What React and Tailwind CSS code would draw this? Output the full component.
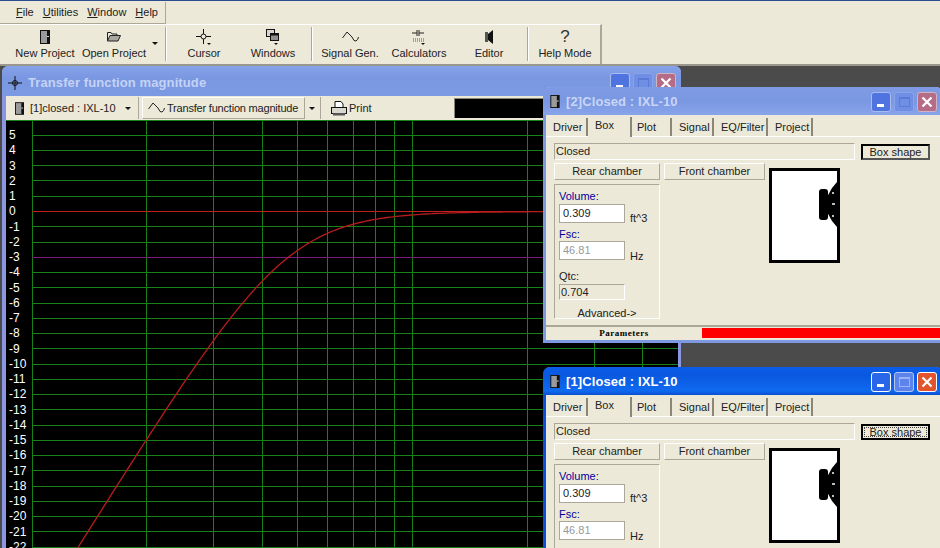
import React from "react"

const yLabels = []
for (let i = 5; i >= -22; i--) yLabels.push(i)

// vertical lines, log scale 10Hz..500Hz
const gridX = [146, 213, 262, 297, 327, 353, 375, 394, 412, 527, 594, 642]

function curvePoints() {
  const pts = []
  for (let x = 78; x <= 678; x += 3) {
    const f = 10 * Math.pow(10, (x - 32) / 381)
    const r = f / 46.81
    const db = 10 * Math.log10(r ** 4 / ((r * r - 1) ** 2 + (r / 0.704) ** 2))
    pts.push(`${x - 32},${(90.5 - db * 15.26).toFixed(1)}`)
  }
  return pts.join(" ")
}

function DriverIcon({ className }) {
  return (
    <svg viewBox="0 0 10 14" className={className}>
      <rect x="0" y="0" width="10" height="14" fill="#111" />
      <rect x="1" y="1" width="6" height="12" fill="#9a9a9a" />
      <rect x="7" y="6" width="2" height="1" fill="#ddd" />
    </svg>
  )
}

function ToolButton({ w, label, children }) {
  return (
    <div className={`flex flex-col items-center pt-[2px] ${w}`}>
      <div className="h-[19px] flex items-center justify-center">{children}</div>
      <span className="text-[11px] leading-[14px] text-[#222] whitespace-nowrap">{label}</span>
    </div>
  )
}

function Sep() {
  return <div className="w-[2px] h-[34px] mt-[2px] border-l border-r border-l-[#aca899] border-r-white" />
}

function Raised({ className, children }) {
  return (
    <div className={`flex items-center justify-center text-[11px] text-[#222] border border-t-white border-l-white border-r-[#aca899] border-b-[#aca899] ${className}`}>
      {children}
    </div>
  )
}

function TitleButtons({ active }) {
  const blue = active ? "bg-[#2a66e8] border-white" : "bg-[#4f74e0] border-[#a9bcef]"
  const red = active ? "bg-[#e2552c] border-white" : "bg-[#b56c86] border-[#d0b4c4]"
  return (
    <div className="flex gap-[3px]">
      <div className={`w-[20px] h-[20px] rounded-[3px] border flex items-end pl-[5px] pb-[4px] ${blue}`}>
        <div className="w-[7px] h-[3px] bg-white" />
      </div>
      <div className={`w-[20px] h-[20px] rounded-[3px] border flex items-center justify-center ${active ? "bg-[#5c84ec] border-[#b4c6f4]" : "bg-[#6f8ee4] border-[#8aa4ea]"}`}>
        <div className={`w-[11px] h-[10px] border border-t-2 ${active ? "border-[#9db4f0]" : "border-[#5a7ad8]"}`} />
      </div>
      <div className={`w-[20px] h-[20px] rounded-[3px] border flex items-center justify-center ${red}`}>
        <svg viewBox="0 0 12 12" className="w-[12px] h-[12px]">
          <path d="M1.5 1.5 L10.5 10.5 M10.5 1.5 L1.5 10.5" stroke="#fff" strokeWidth="2.2" />
        </svg>
      </div>
    </div>
  )
}

function SpeakerBox() {
  return (
    <div className="w-[71px] h-[95px] border-[3px] border-black bg-white mt-[5px] ml-[4px]">
      <svg viewBox="0 0 65 89" className="w-[65px] h-[89px]">
        <rect x="47" y="18" width="9" height="31" rx="3" fill="#000" />
        <path d="M55 26 L60 17 L65 11 V56 L60 50 L55 41 Z" fill="#000" />
        <rect x="60" y="21" width="2" height="2" fill="#bbb" />
        <rect x="60" y="32" width="3" height="2" fill="#bbb" />
        <rect x="60" y="44" width="2" height="2" fill="#bbb" />
      </svg>
    </div>
  )
}

function Tab({ className, label, active }) {
  if (active) {
    return (
      <div className={`${className} h-[20px] mt-[2px] text-[11px] leading-[16px] border-r-2 border-[#8a8778] text-[#222] bg-[#ece9d8] z-10`}>
        {label}
      </div>
    )
  }
  return (
    <div className={`${className} h-[18px] mt-[3px] text-[11px] leading-[18px] border-r-2 border-[#8a8778] text-[#222]`}>
      {label}
    </div>
  )
}

function BoxWindow({ top, title, active, focused }) {
  const frame = active ? "border-[#0a50dc]" : "border-[#7c99e2]"
  const bar = active
    ? "bg-[linear-gradient(#0a5ce8,#0a58e0_30%,#0f6af0_85%,#0a4fd0)] text-white"
    : "bg-[linear-gradient(#7f9be4,#7a97e2_50%,#88a4ea)] text-[#c8d6f6]"
  return (
    <div className={`absolute left-[543px] ${top} w-[400px] h-[256px] rounded-t-[7px] border-[3px] border-t-0 ${frame} bg-[#ece9d8] flex flex-col`}>
      <div className={`h-[28px] -mx-[3px] rounded-t-[7px] flex items-center pl-[7px] pr-[6px] pt-[1px] ${bar}`}>
        <DriverIcon className="w-[10px] h-[13px]" />
        <span className="ml-[6px] text-[13px] font-bold tracking-[0.1px] flex-1 whitespace-nowrap">{title}</span>
        <TitleButtons active={active} />
      </div>
      <div className="flex h-[21px] pl-[7px] items-start">
        <Tab className="w-[35px]" label="Driver" />
        <Tab className="w-[44px] pl-[7px]" label="Box" active />
        <Tab className="w-[40px] pl-[5px]" label="Plot" />
        <Tab className="w-[42px] pl-[7px]" label="Signal" />
        <Tab className="w-[54px] pl-[7px]" label="EQ/Filter" />
        <Tab className="w-[45px] pl-[7px]" label="Project" />
      </div>
      <div className="flex-1 pl-[8px] pt-[6px] border-t border-white">
        <div className="flex h-[20px]">
          <div className="w-[301px] h-[17px] pl-px text-[11px] leading-[15px] text-[#222] border border-t-[#aca899] border-l-[#aca899] border-r-white border-b-white">Closed</div>
          {focused ? (
            <div className="ml-[6px] w-[69px] h-[16px] mt-[1px] border-2 border-black flex items-center justify-center text-[11px] text-[#222] outline-1 -outline-offset-4 outline-dotted outline-[#444]">Box shape</div>
          ) : (
            <div className="ml-[6px] w-[69px] h-[16px] mt-[1px] border-2 border-black border-r-[#555] border-b-[#555] flex items-center justify-center text-[11px] text-[#222]">Box shape</div>
          )}
        </div>
        <div className="flex">
          <div className="w-[106px]">
            <Raised className="h-[17px]">Rear chamber</Raised>
            <div className="mt-[4px] h-[135px] border border-t-[#aca899] border-l-[#aca899] border-r-white border-b-white pl-[4px] text-[11px] leading-[14px] text-[#222]">
              <div className="text-[#00009c] mt-[4px]">Volume:</div>
              <div className="flex">
                <div className="w-[66px] h-[19px] mt-px bg-white border border-[#aca899] pl-[3px] leading-[17px]">0.309</div>
                <span className="ml-[5px] mt-[8px]">ft^3</span>
              </div>
              <div className="text-[#00009c] mt-[2px]">Fsc:</div>
              <div className="flex">
                <div className="w-[66px] h-[19px] bg-white border border-[#aca899] pl-[3px] leading-[17px] text-[#999]">46.81</div>
                <span className="ml-[5px] mt-[8px]">Hz</span>
              </div>
              <div className="mt-[6px]">Qtc:</div>
              <div className="w-[66px] h-[16px] mt-px border border-t-[#aca899] border-l-[#aca899] border-r-white border-b-white pl-px leading-[14px]">0.704</div>
              <div className="mt-[6px] w-[96px] text-center">Advanced-&gt;</div>
            </div>
          </div>
          <div className="w-[101px] ml-[4px]">
            <Raised className="h-[17px]">Front chamber</Raised>
          </div>
          <SpeakerBox />
        </div>
      </div>
      <div className="h-[15px] flex border-t-2 border-[#aca899] bg-[#ece9d8] -mr-[3px]">
        <div className="w-[156px] text-center font-['Liberation_Serif',serif] font-bold text-[9px] tracking-[0.5px] leading-[13px] text-black">Parameters</div>
        <div className="flex-1 mt-[1px] h-[10px] bg-[#fe0000]" />
      </div>
    </div>
  )
}

export default function App() {
  return (
    <div className="relative w-[940px] h-[548px] overflow-hidden bg-[#ece9d8] font-['Liberation_Sans',Arial,sans-serif] flex flex-col">
      <div className="h-[1px] bg-[#2b4c8f]" />

      <div className="w-[166px] h-[22px] mt-[1px] flex items-center gap-[9px] pl-[16px] text-[11px] text-[#222] border-r border-b border-[#aca899] shrink-0">
        <span><u>F</u>ile</span>
        <span><u>U</u>tilities</span>
        <span><u>W</u>indow</span>
        <span><u>H</u>elp</span>
      </div>

      <div className="w-[602px] h-[40px] flex border-t border-white border-r-2 border-r-[#aca899] shrink-0">
        <div className="w-[10px]" />
        <ToolButton w="w-[70px]" label="New Project">
          <DriverIcon className="w-[10px] h-[14px]" />
        </ToolButton>
        <ToolButton w="w-[68px]" label="Open Project">
          <svg viewBox="0 0 14 11" className="w-[14px] h-[11px]">
            <path d="M0.5 10 V1.5 H4 L5 3 H10 V4.5" fill="none" stroke="#222" />
            <path d="M0.5 10 L3 4.5 H13.5 L11 10 Z" fill="#a8a8a0" stroke="#222" />
          </svg>
        </ToolButton>
        <div className="w-[17px] pt-[17px] pl-[4px]">
          <div className="w-0 h-0 border-x-[3px] border-x-transparent border-t-[3px] border-t-[#111]" />
        </div>
        <Sep />
        <div className="w-[3px]" />
        <ToolButton w="w-[68px]" label="Cursor">
          <svg viewBox="0 0 16 16" className="w-[16px] h-[16px]">
            <path d="M7.5 0 V15 M0 7.5 H15" stroke="#111" />
            <circle cx="7.5" cy="7.5" r="2.5" fill="#ece9d8" stroke="#111" />
            <path d="M11 14 h4 l-2 2 z" fill="#111" />
          </svg>
        </ToolButton>
        <ToolButton w="w-[70px]" label="Windows">
          <svg viewBox="0 0 14 16" className="w-[14px] h-[16px]">
            <rect x="0.5" y="0.5" width="8" height="7" fill="#d8d8d0" stroke="#111" />
            <rect x="4.5" y="4.5" width="8" height="7" fill="#909090" stroke="#111" />
            <rect x="4.5" y="4.5" width="8" height="2" fill="#111" />
            <path d="M8 14 h4 l-2 2 z" fill="#111" />
          </svg>
        </ToolButton>
        <div className="w-[3px]" />
        <Sep />
        <div className="w-[2px]" />
        <ToolButton w="w-[70px]" label="Signal Gen.">
          <svg viewBox="0 0 17 12" className="w-[17px] h-[12px]">
            <path d="M0.5 7 L5 1 L10 6 Q12 11 14 10 Q16 9 16.5 6" fill="none" stroke="#222" />
          </svg>
        </ToolButton>
        <ToolButton w="w-[68px]" label="Calculators">
          <svg viewBox="0 0 16 16" className="w-[16px] h-[16px]">
            <path d="M1 4 H6 M6 1 V7 M8 1 V7 M8 4 H13" stroke="#222" />
            <path d="M2 10 H13 M2 12 H13" stroke="#555" strokeDasharray="1 1" />
            <path d="M10 14 h4 l-2 2 z" fill="#111" />
          </svg>
        </ToolButton>
        <ToolButton w="w-[72px]" label="Editor">
          <svg viewBox="0 0 9 14" className="w-[9px] h-[14px]">
            <rect x="0" y="2" width="3" height="10" fill="#555" />
            <path d="M3 4 L8 0 V14 L3 10 Z" fill="#111" />
          </svg>
        </ToolButton>
        <div className="w-[2px]" />
        <Sep />
        <div className="w-[1px]" />
        <ToolButton w="w-[70px]" label="Help Mode">
          <span className="text-[17px] leading-[18px] text-[#333]">?</span>
        </ToolButton>
      </div>

      <div className="relative flex-1 bg-[#4b4b4b] border-t-2 border-[#9a988c]">
        <div className="absolute left-[2px] top-0 w-[679px] h-[520px] rounded-t-[6px] bg-[#8a96e0] pl-[4px] pr-[3px] flex flex-col">
          <div className="-ml-[4px] -mr-[3px] h-[30px] pt-[3px] pl-[6px] pr-[5px] rounded-t-[6px] shrink-0 flex items-center text-[#c4d3f4] font-bold text-[13px] tracking-[0.1px] bg-[linear-gradient(#86a2e8,#7a97e2_40%,#7c99e2)]">
            <svg viewBox="0 0 14 14" className="w-[14px] h-[14px] mr-[6px]">
              <path d="M7 0 V14 M0 7 H14" stroke="#111" />
              <circle cx="7" cy="7" r="2.5" fill="none" stroke="#111" />
            </svg>
            <span className="flex-1 whitespace-nowrap">Transfer function magnitude</span>
            <TitleButtons />
          </div>

          <div className="h-[24px] bg-[#ece9d8] flex items-center text-[11px] text-[#222] shrink-0">
            <div className="w-[132px] flex items-center shrink-0">
              <DriverIcon className="w-[9px] h-[13px] ml-[9px]" />
              <span className="ml-[6px] whitespace-nowrap">[1]closed : IXL-10</span>
              <div className="ml-[9px] w-0 h-0 border-x-[3px] border-x-transparent border-t-[3px] border-t-[#111]" />
            </div>
            <div className="w-px h-[22px] bg-[#aca899]" />
            <div className="ml-[3px] w-[163px] h-[22px] flex items-center border border-t-white border-l-white border-r-[#aca899] border-b-[#aca899] shrink-0">
              <svg viewBox="0 0 17 12" className="w-[17px] h-[12px] ml-[5px] mr-[2px] shrink-0">
                <path d="M0.5 7 L5 1 L10 6 Q12 11 14 10 Q16 9 16.5 6" fill="none" stroke="#222" />
              </svg>
              <span className="whitespace-nowrap tracking-[-0.2px]">Transfer function magnitude</span>
            </div>
            <div className="ml-[4px] w-0 h-0 border-x-[3px] border-x-transparent border-t-[3px] border-t-[#111]" />
            <div className="ml-[5px] w-px h-[22px] bg-[#aca899]" />
            <svg viewBox="0 0 16 15" className="w-[16px] h-[15px] ml-[10px] mr-[2px] shrink-0">
              <path d="M4 6 V0.5 H10 L12 3 V6" fill="#fff" stroke="#111" />
              <rect x="0.5" y="6.5" width="15" height="6" fill="#d8d8d0" stroke="#111" />
              <rect x="2" y="12" width="12" height="2.5" fill="#555" />
            </svg>
            <span className="w-[21px] whitespace-nowrap">Print</span>
            <div className="ml-[84px] w-[100px] h-[20px] bg-black border-l border-t border-[#8a8778]" />
          </div>

          <div className="flex bg-black flex-1 border-t border-[#188018] overflow-hidden">
            <div className="w-[26px] shrink-0 pt-[7px] text-[12px] text-white">
              {yLabels.map((n) => (
                <div key={n} className="h-[15.26px] leading-[15px] pl-[3px]">{n}</div>
              ))}
            </div>
            <svg className="w-[646px] h-[430px] shrink-0" viewBox="0 0 646 430">
              <line x1="0.5" y1="0" x2="0.5" y2="430" stroke="#188018" />
              {gridX.map((x) => (
                <line key={x} x1={x - 31.5} y1="0" x2={x - 31.5} y2="430" stroke="#188018" />
              ))}
              {yLabels.map((n) => {
                const y = Math.round(90 - n * 15.26) + 0.5
                const color = n === 0 ? "#c02020" : n === -3 ? "#7a1a7a" : "#188018"
                return <line key={n} x1="0" y1={y} x2="646" y2={y} stroke={color} />
              })}
              <polyline points={curvePoints()} fill="none" stroke="#b81c1c" strokeWidth="1.3" />
            </svg>
          </div>
        </div>

        <BoxWindow top="top-[21px]" title="[2]Closed : IXL-10" />
        <BoxWindow top="top-[301px]" title="[1]Closed : IXL-10" active focused />
      </div>
    </div>
  )
}
